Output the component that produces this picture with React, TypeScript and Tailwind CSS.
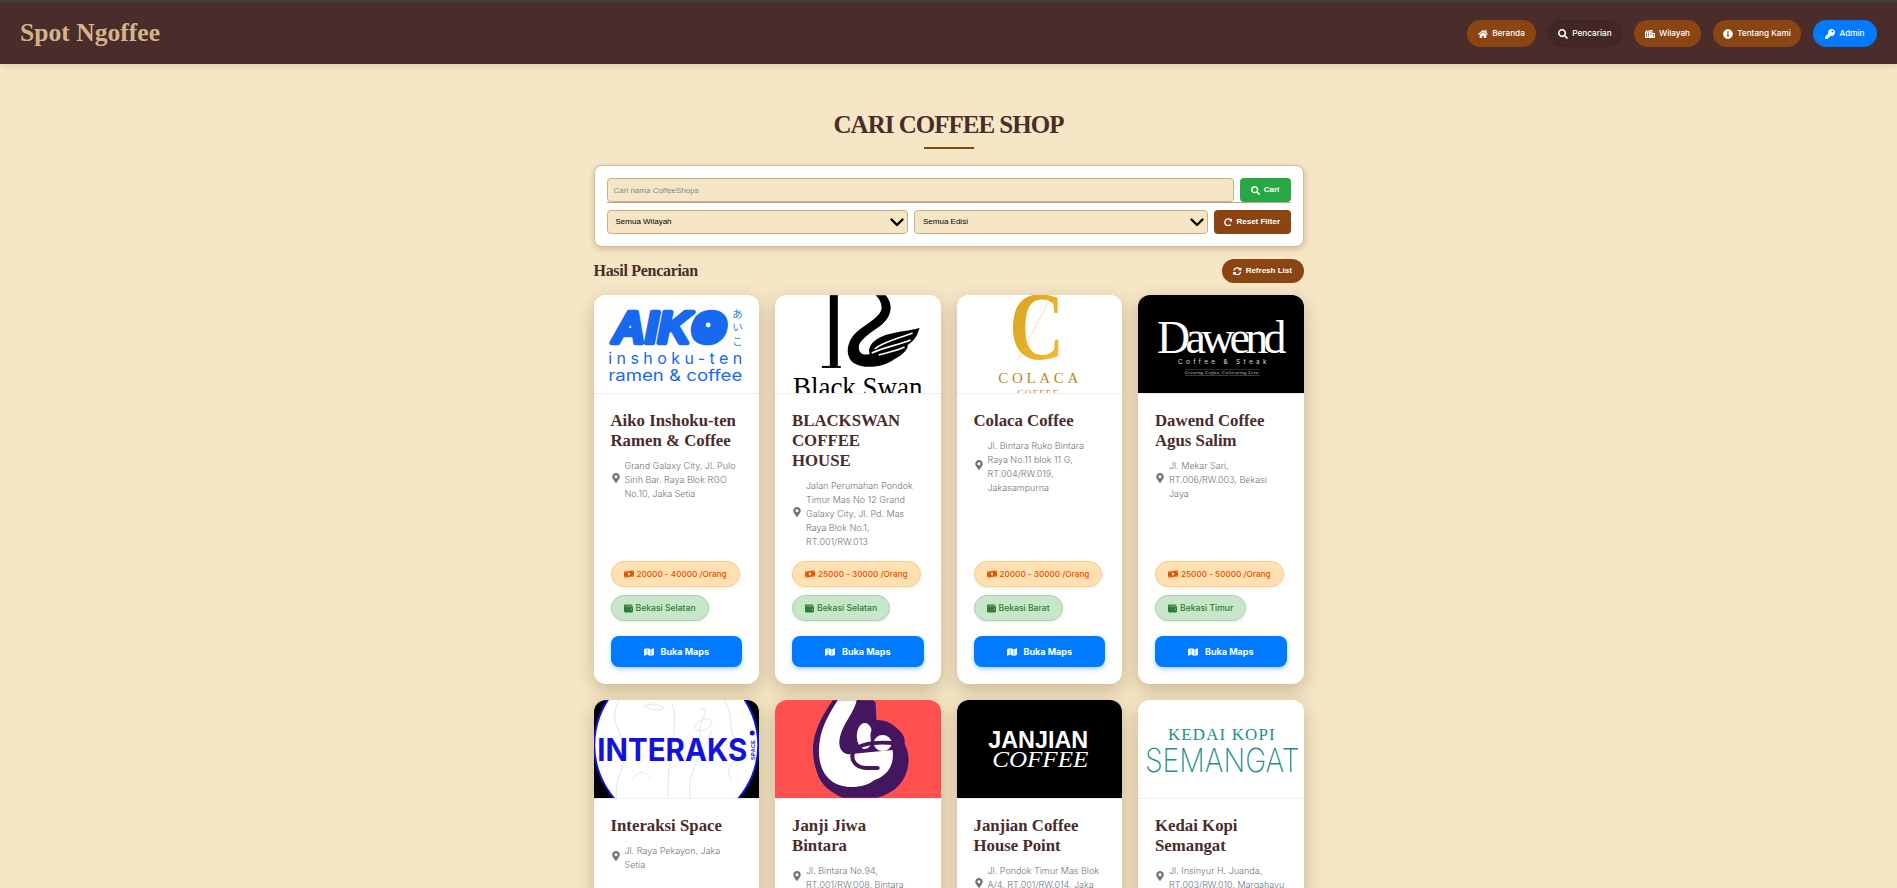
import React from "react";
import { FaHome, FaSearch, FaCity, FaInfoCircle, FaKey, FaRedoAlt, FaSyncAlt, FaMapMarkerAlt, FaMoneyBillWave, FaWallet, FaMap } from "react-icons/fa";

const serif = "Liberation Serif, serif";
const sans = "Liberation Sans, Arial, sans-serif";

function Aiko() {
  return (
    <svg viewBox="0 0 165 98" className="block h-full w-full bg-white">
      <circle cx="113" cy="31" r="14" fill="#1769f0" />
      <text x="18" y="48" fontFamily={sans} fontWeight="700" fontStyle="italic" fontSize="45" textLength="114" lengthAdjust="spacingAndGlyphs" fill="#1769f0" stroke="#1769f0" strokeWidth="4.5" strokeLinejoin="round">AIKO</text>
      <circle cx="114" cy="30" r="2.4" fill="#fff" />
      <g fontFamily="Noto Sans CJK JP, sans-serif" fontSize="10.5" fill="#3f7fe0">
        <text x="138" y="23">あ</text>
        <text x="138" y="36">い</text>
        <text x="138" y="50">こ</text>
      </g>
      <text x="14" y="69" fontFamily="Inter, sans-serif" fontSize="16" textLength="134" fill="#1769f0" fontWeight="400">inshoku-ten</text>
      <text x="14" y="86" fontFamily="Inter, sans-serif" fontSize="16" textLength="134" lengthAdjust="spacingAndGlyphs" fill="#1769f0">ramen &amp; coffee</text>
    </svg>
  );
}

function Swan() {
  return (
    <svg viewBox="0 0 166 98" className="block h-full w-full bg-white">
      <rect x="55" y="0" width="8" height="71" fill="#000" />
      <rect x="47" y="71" width="19" height="2" fill="#000" />
      <path d="M101 0H111C119 9 118 22 104 32C92 40 84 47 84 52C84 58 88 61 95 59C92 50 102 42 115 39C126 36 134 36 145 33C143 40 140 46 133 50C134 54 128 60 120 64C110 72 90 75 79 68C70 62 71 46 83 36C93 28 106 22 107 13C107 8 105 4 101 0Z" fill="#000" />
      <path d="M100 54C108 47 122 44 138 38M97 58C110 52 124 50 136 45M104 60C114 57 122 56 130 52" stroke="#fff" strokeWidth="1.6" fill="none" />
      <text x="18" y="102" fontFamily={serif} fontSize="30" textLength="130" lengthAdjust="spacingAndGlyphs" fill="#000">Black Swan</text>
    </svg>
  );
}

function Colaca() {
  return (
    <svg viewBox="0 0 165 98" className="block h-full w-full bg-white">
      <defs>
        <linearGradient id="gold" x1="0" y1="0" x2="1" y2="1">
          <stop offset="0" stopColor="#d99f19" />
          <stop offset="1" stopColor="#f0c040" />
        </linearGradient>
      </defs>
      <text x="52" y="64" fontFamily={serif} fontWeight="700" fontSize="97" textLength="55" lengthAdjust="spacingAndGlyphs" fill="url(#gold)">C</text>
      <line x1="91" y1="7" x2="61" y2="65" stroke="#d9b56a" strokeWidth="0.6" strokeDasharray="1 .6" />
      <text x="41" y="88" fontFamily={serif} fontSize="15" textLength="80" fill="#b98a1c">COLACA</text>
      <text x="60" y="101" fontFamily={serif} fontSize="9" textLength="41" fill="#b98a1c">COFFEE</text>
    </svg>
  );
}

function Dawend() {
  return (
    <svg viewBox="0 0 166 98" className="block h-full w-full bg-black">
      <text x="19" y="58" fontFamily={serif} fontSize="46" textLength="130" lengthAdjust="spacing" fill="#fff">Dawend</text>
      <text x="40" y="69" fontFamily="Inter, sans-serif" fontSize="6.5" textLength="89" fill="#ddd">Coffee &amp; Steak</text>
      <text x="47" y="79" fontFamily={serif} fontStyle="italic" fontSize="4.6" textLength="75" fill="#ccc">Growing Coffee, Cultivating Love.</text>
      <line x1="47" y1="80.5" x2="122" y2="80.5" stroke="#aaa" strokeWidth=".4" />
      <line x1="47" y1="74.5" x2="122" y2="74.5" stroke="#777" strokeWidth=".4" />
    </svg>
  );
}

function Interaks() {
  return (
    <svg viewBox="0 0 165 98" className="block h-full w-full bg-black">
      <circle cx="82" cy="45" r="82" fill="#fff" stroke="#1414d8" strokeWidth="2" />
      <g fill="none" stroke="#cfe5dc" strokeWidth=".8">
        <path d="M25 0C14 20 26 30 30 45C34 65 20 75 22 98" />
        <path d="M78 5C86 30 72 50 74 98" />
        <path d="M105 10C122 2 98 30 108 36M96 98C92 70 108 56 118 30" />
        <path d="M50 6C58 2 66 5 70 8C62 12 56 10 50 6Z" />
        <path d="M100 28C106 16 116 18 118 22C114 30 106 34 100 28Z" />
        <path d="M38 80C44 70 52 70 56 78M138 80C128 70 142 60 146 50" />
        <path d="M130 0C140 14 134 30 140 38" />
      </g>
      <text x="3" y="61" fontFamily="Inter, sans-serif" fontWeight="700" fontSize="31" textLength="150" lengthAdjust="spacingAndGlyphs" fill="#1212e0">INTERAKS</text>
      <circle cx="158" cy="33" r="2.5" fill="#1212e0" />
      <text transform="translate(161,60) rotate(-90)" fontFamily={sans} fontWeight="700" fontSize="5.5" textLength="20" fill="#1212e0">SPACE</text>
    </svg>
  );
}

function JanjiJiwa() {
  return (
    <svg viewBox="0 0 166 98" className="block h-full w-full bg-[#ff5050]">
      <path d="M58 0H98C102 2 101 4 101 8C102 14 101 17 102 20C110 20 117 23 122 28C128 33 131 38 130 44C134 52 135 60 133 68C131 78 125 87 116 92C110 96 104 98 100 98H68C56 92 46 86 42 72C37 58 37 44 41 32C45 20 52 8 58 0Z" fill="#451660" />
      <path d="M63 0H84C82 12 72 22 68 34C64 46 68 54 76 54L118 50C120 66 112 76 100 80C90 88 70 90 58 82C46 74 42 58 45 40C47 26 55 12 63 0Z" fill="#fff" />
      <ellipse cx="90" cy="36" rx="8" ry="13" fill="#fff" />
      <ellipse cx="108" cy="43" rx="9" ry="8" fill="#fff" />
      <path d="M84 0C82 12 72 22 68 34C64 46 68 54 78 52" fill="none" stroke="#451660" strokeWidth="4" strokeLinecap="round" />
      <path d="M118 43C104 42 88 42 80 50C74 58 80 68 92 68H103" fill="none" stroke="#451660" strokeWidth="4" strokeLinecap="round" />
      <path d="M98 44C98 40 96 36 98 31" fill="none" stroke="#451660" strokeWidth="3" strokeLinecap="round" />
    </svg>
  );
}

function Janjian() {
  return (
    <svg viewBox="0 0 165 98" className="block h-full w-full bg-black">
      <text x="31" y="48" fontFamily={sans} fontWeight="700" fontSize="24" textLength="100" lengthAdjust="spacingAndGlyphs" fill="#fff">JANJIAN</text>
      <text x="35" y="67" fontFamily={serif} fontStyle="italic" fontSize="24" textLength="96" lengthAdjust="spacingAndGlyphs" fill="#fff">COFFEE</text>
    </svg>
  );
}

function Semangat() {
  return (
    <svg viewBox="0 0 166 98" className="block h-full w-full bg-white">
      <text x="30" y="40" fontFamily={serif} fontSize="17" textLength="107" fill="#1c8f88">KEDAI KOPI</text>
      <text x="7" y="72" fontFamily="Inter, sans-serif" fontWeight="200" fontSize="33" textLength="155" lengthAdjust="spacingAndGlyphs" fill="#1c8f88">SEMANGAT</text>
    </svg>
  );
}

type Shop = { name: string; address: string[]; price?: string; area?: string; Logo: () => React.ReactElement };

const shops: Shop[] = [
  { name: "Aiko Inshoku-ten Ramen & Coffee", address: ["Grand Galaxy City, Jl. Pulo", "Sirih Bar. Raya Blok RGO", "No.10, Jaka Setia"], price: "20000 - 40000 /Orang", area: "Bekasi Selatan", Logo: Aiko },
  { name: "BLACKSWAN\nCOFFEE\nHOUSE", address: ["Jalan Perumahan Pondok", "Timur Mas No 12 Grand", "Galaxy City, Jl. Pd. Mas", "Raya Blok No.1,", "RT.001/RW.013"], price: "25000 - 30000 /Orang", area: "Bekasi Selatan", Logo: Swan },
  { name: "Colaca Coffee", address: ["Jl. Bintara Ruko Bintara", "Raya No.11 blok 11 G,", "RT.004/RW.019,", "Jakasampurna"], price: "20000 - 30000 /Orang", area: "Bekasi Barat", Logo: Colaca },
  { name: "Dawend Coffee Agus Salim", address: ["Jl. Mekar Sari,", "RT.006/RW.003, Bekasi", "Jaya"], price: "25000 - 50000 /Orang", area: "Bekasi Timur", Logo: Dawend },
  { name: "Interaksi Space", address: ["Jl. Raya Pekayon, Jaka", "Setia"], Logo: Interaks },
  { name: "Janji Jiwa Bintara", address: ["Jl. Bintara No.94,", "RT.001/RW.008, Bintara"], Logo: JanjiJiwa },
  { name: "Janjian Coffee House Point", address: ["Jl. Pondok Timur Mas Blok", "A/4, RT.001/RW.014, Jaka", "Setia"], Logo: Janjian },
  { name: "Kedai Kopi Semangat", address: ["Jl. Insinyur H. Juanda,", "RT.003/RW.010, Margahayu"], Logo: Semangat },
];

const nav = [
  { label: "Beranda", Icon: FaHome, cls: "w-[69px] bg-[#8b4513]" },
  { label: "Pencarian", Icon: FaSearch, cls: "w-[74px] bg-[#432725] border border-[#3f2422]" },
  { label: "Wilayah", Icon: FaCity, cls: "w-[67px] bg-[#8b4513]" },
  { label: "Tentang Kami", Icon: FaInfoCircle, cls: "w-[88px] bg-[#8b4513]" },
  { label: "Admin", Icon: FaKey, cls: "w-[64px] bg-[#007bff]" },
];

function Chevron() {
  return (
    <svg viewBox="0 0 16 16" className="h-4 w-4 shrink-0" fill="none" stroke="#000" strokeWidth="2.4" strokeLinecap="round" strokeLinejoin="round">
      <path d="M2.5 5.5L8 11l5.5-5.5" />
    </svg>
  );
}

function Card({ s }: { s: Shop }) {
  const Logo = s.Logo;
  return (
    <div className="flex flex-col overflow-hidden rounded-[12px] bg-white shadow-[0_6px_18px_rgba(90,60,20,0.28)]">
      <div className="h-[99px] shrink-0 overflow-hidden border-b border-[#eeeeee]">
        <Logo />
      </div>
      <div className="flex flex-1 flex-col px-[17px] pb-[17px] pt-[17px]">
        <h3 className="whitespace-pre-line font-['Liberation_Serif',serif] text-[16.8px] font-bold leading-[20px] text-[#4a2c2a]">{s.name}</h3>
        <div className="mt-[8px] flex flex-1 items-start">
          <div className="flex items-center gap-[4px]">
            <FaMapMarkerAlt className="mb-[4px] shrink-0 text-[10px] text-[#6c757d]" />
            <p className="whitespace-nowrap font-['Inter',sans-serif] text-[9px] font-light leading-[14px] text-[#6c757d]">
              {s.address.map((line) => (
                <span key={line} className="block">{line}</span>
              ))}
            </p>
          </div>
        </div>
        {s.price && (
          <div className="mt-[12px] flex flex-col items-start gap-[8px]">
            <span className="flex h-[26px] items-center gap-[3px] whitespace-nowrap rounded-full border border-[#ffcc80] bg-[#ffe0b2] px-[12px] font-['Inter',sans-serif] text-[8.2px] font-medium text-[#e65100] shadow-[0_1px_3px_rgba(0,0,0,0.08)]">
              <FaMoneyBillWave className="text-[10px]" />
              {s.price}
            </span>
            <span className="flex h-[26px] items-center gap-[3px] whitespace-nowrap rounded-full border border-[#a5d6a7] bg-[#c8e6c9] px-[12px] font-['Inter',sans-serif] text-[8.6px] font-medium text-[#2e7d32] shadow-[0_1px_3px_rgba(0,0,0,0.08)]">
              <FaWallet className="text-[9px]" />
              {s.area}
            </span>
            <button className="mt-[7px] flex h-[31px] w-full items-center justify-center gap-[7px] rounded-[8px] bg-[#007bff] font-['Inter',sans-serif] text-[9px] font-bold text-white shadow-[0_2px_5px_rgba(0,123,255,0.35)]">
              <FaMap className="text-[10px]" />
              Buka Maps
            </button>
          </div>
        )}
      </div>
    </div>
  );
}

export default function App() {
  return (
    <div className="h-screen overflow-hidden bg-[#f5e6c5] font-['Liberation_Sans',Arial,sans-serif]">
      <header className="flex h-[64px] items-center justify-between border-t-[3px] border-[#3e3f30] bg-[#4a2c2a] px-[20px] shadow-[0_2px_6px_rgba(0,0,0,0.1)]">
        <div className="font-['Liberation_Serif',serif] text-[25.6px] font-bold text-[#d2b48c]">Spot Ngoffee</div>
        <nav className="flex items-center gap-[12px]">
          {nav.map(({ label, Icon, cls }) => (
            <a key={label} className={`flex h-[27px] items-center justify-center gap-[4px] rounded-full font-['Inter',sans-serif] text-[8.2px] font-medium text-white ${cls}`}>
              <Icon className="text-[10px]" />
              {label}
            </a>
          ))}
        </nav>
      </header>
      <main className="mx-auto w-[710px]">
        <h1 className="mt-[44px] text-center font-['Liberation_Serif',serif] text-[25px] font-bold leading-[34px] tracking-[-1px] text-[#4a2c2a]">CARI COFFEE SHOP</h1>
        <div className="mx-auto mt-[5px] h-[2px] w-[50px] bg-[#8b4513]" />
        <section className="mt-[16px] rounded-[8px] border border-[#d4bd96] bg-white px-[12px] pb-[12px] pt-[12px] shadow-[0_2px_6px_rgba(90,60,20,0.25)]">
          <div className="flex gap-[6px] border-b border-[#b9a78a]">
            <input readOnly placeholder="Cari nama CoffeeShops" className="h-[24px] flex-1 rounded-[4px] border border-[#c8b08a] bg-[#f5e6c5] px-[6px] text-[8px] placeholder:text-[#888]" />
            <button className="flex h-[24px] w-[51px] items-center justify-center gap-[4px] rounded-[4px] bg-[#28a745] text-[8px] font-bold text-white">
              <FaSearch className="text-[9px]" />
              Cari
            </button>
          </div>
          <div className="mt-[7px] flex gap-[6px]">
            <div className="flex h-[24px] w-[301.5px] items-center justify-between rounded-[4px] border border-[#c8b08a] bg-[#f5e6c5] pl-[8px] pr-[2px] text-[8px] text-black">
              Semua Wilayah
              <Chevron />
            </div>
            <div className="flex h-[24px] w-[293.5px] items-center justify-between rounded-[4px] border border-[#c8b08a] bg-[#f5e6c5] pl-[8px] pr-[2px] text-[8px] text-black">
              Semua Edisi
              <Chevron />
            </div>
            <button className="flex h-[24px] flex-1 items-center justify-center gap-[4px] whitespace-nowrap rounded-[4px] bg-[#8b4513] text-[8px] font-bold text-white">
              <FaRedoAlt className="text-[8.5px]" />
              Reset Filter
            </button>
          </div>
        </section>
        <div className="mt-[12px] flex h-[24px] items-center justify-between">
          <h2 className="font-['Liberation_Serif',serif] text-[16px] font-bold tracking-[-0.3px] text-[#4a2c2a]">Hasil Pencarian</h2>
          <button className="flex h-[24px] w-[82px] items-center justify-center gap-[4px] whitespace-nowrap rounded-full bg-[#8b4513] text-[8px] font-bold text-white">
            <FaSyncAlt className="text-[8.5px]" />
            Refresh List
          </button>
        </div>
        <div className="mt-[12px] grid grid-cols-4 gap-[16px]">
          {shops.map((s) => (
            <Card key={s.name} s={s} />
          ))}
        </div>
      </main>
    </div>
  );
}
